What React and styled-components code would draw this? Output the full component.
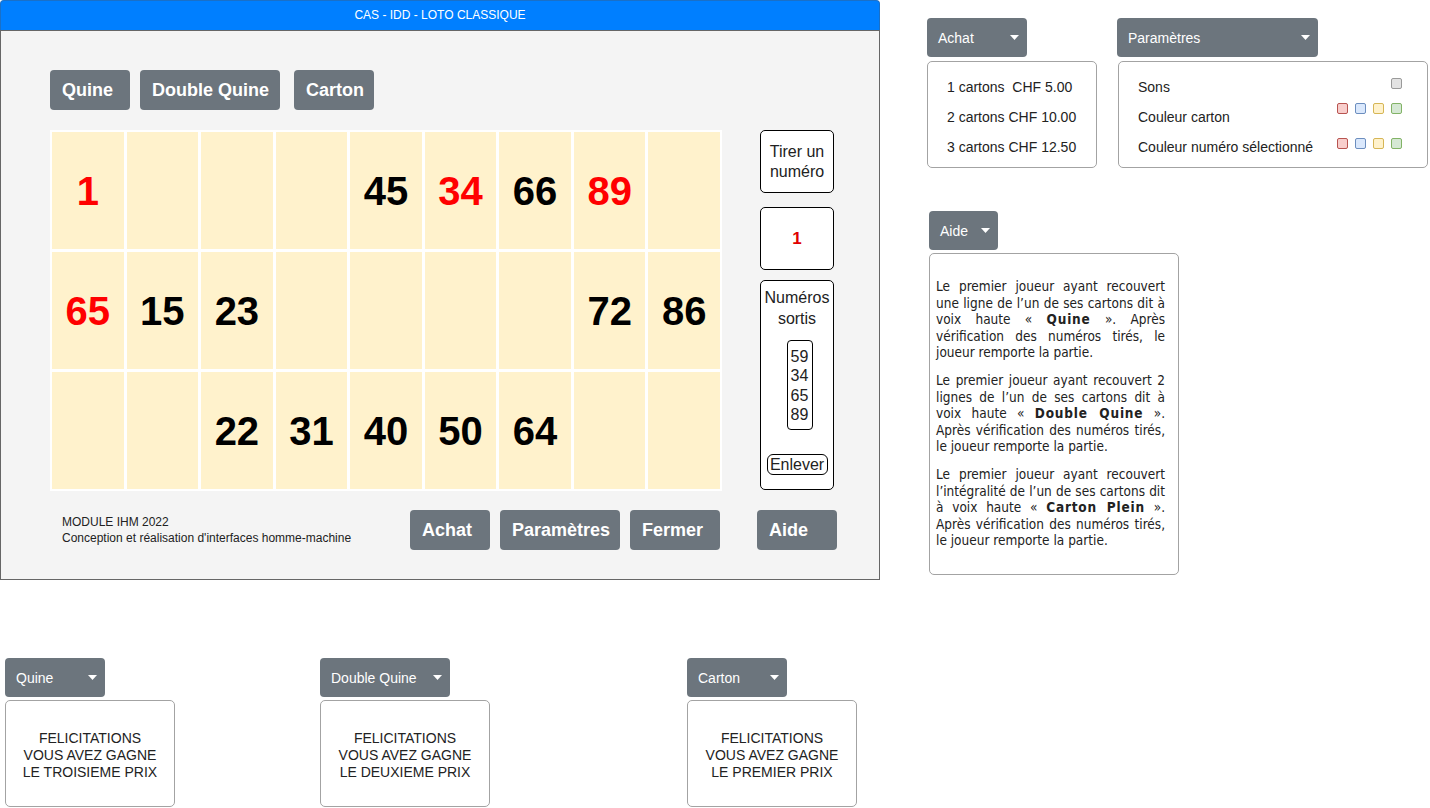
import React from 'react';
import styled, { createGlobalStyle } from 'styled-components';

const GlobalStyle = createGlobalStyle`
  html, body {
    margin: 0;
    padding: 0;
    background: #ffffff;
  }
  body {
    font-family: 'Liberation Sans', Arial, sans-serif;
    color: #222;
  }
  * { box-sizing: border-box; }
`

const Canvas = styled.div`
  position: relative;
  width: 1430px;
  height: 808px;
  overflow: hidden;
`

// windows of the mockup lie on a free canvas
const Placed = styled.div`
  position: absolute;
  left: ${p => p.$x}px;
  top: ${p => p.$y}px;
  display: flex;
  flex-direction: column;
`

const Window = styled(Placed)`
  width: 880px;
  height: 580px;
`

const TitleBar = styled.div`
  height: 30px;
  background: #007fff;
  border-radius: 4px 4px 0 0;
  border: 1px solid #1a70c8;
  border-bottom: none;
  color: #fff;
  font-size: 12px;
  display: flex;
  align-items: center;
  justify-content: center;
  padding-bottom: 1px;
`

const WindowBody = styled.div`
  flex: 1;
  background: #f4f4f4;
  border: 1px solid #666;
  padding: 39px 0 0 49px;
  display: flex;
  flex-direction: column;
`

const ButtonRow = styled.div`
  display: flex;
  gap: 10px;
  align-items: center;
`

const GrayButton = styled.div`
  width: ${p => p.$w}px;
  margin-left: ${p => p.$ml || 0}px;
  height: 40px;
  background: #6c757d;
  border-radius: 4px;
  color: #fff;
  font-weight: bold;
  font-size: 18px;
  display: flex;
  align-items: center;
  padding: 0 12px;
  white-space: nowrap;
`

const PlayArea = styled.div`
  display: flex;
  margin-top: 20px;
  align-items: flex-start;
`

const Board = styled.div`
  width: 672px;
  height: 361px;
  background: #fff;
  padding: 2px;
  display: grid;
  grid-template-columns: repeat(9, 1fr);
  grid-template-rows: repeat(3, 1fr);
  gap: 3px;
`

const Cell = styled.div`
  background: #fff2cc;
  display: flex;
  align-items: center;
  justify-content: center;
  font-weight: bold;
  font-size: 40px;
  padding-top: 2px;
  color: ${p => (p.$hit ? '#ff0000' : '#000')};
`

const Side = styled.div`
  margin-left: 38px;
  width: 74px;
  display: flex;
  flex-direction: column;
`

const SideBox = styled.div`
  height: ${p => p.$h}px;
  margin-bottom: ${p => p.$mb || 0}px;
  background: #fff;
  border: 1px solid #000;
  border-radius: 5px;
  font-size: 16px;
  line-height: ${p => (p.$top ? 21 : 20)}px;
  text-align: center;
  display: flex;
  flex-direction: column;
  align-items: center;
  justify-content: ${p => (p.$top ? 'flex-start' : 'center')};
  padding-top: ${p => (p.$top ? 6 : 0)}px;
`

const DrawnNumber = styled.span`
  color: #e00000;
  font-weight: bold;
  font-size: 17px;
`

const DrawnList = styled.div`
  margin-top: 11px;
  margin-left: 5px;
  width: 26px;
  height: 90px;
  border: 1px solid #000;
  border-radius: 4px;
  padding-top: 6px;
  line-height: 19.3px;
`

const SmallButton = styled.div`
  margin-top: 24px;
  width: 61px;
  height: 21px;
  border: 1px solid #000;
  border-radius: 6px;
  line-height: 19px;
`

const Footer = styled.div`
  display: flex;
  align-items: center;
  margin-top: 19px;
  gap: 10px;
`

const Credits = styled.div`
  margin-left: 12px;
  width: 338px;
  font-size: 12px;
  line-height: 16px;
  color: #222;
`

const DropButton = styled.div`
  width: ${p => p.$w}px;
  height: 39px;
  background: #6c757d;
  border-radius: 4px;
  color: #fff;
  font-size: 14px;
  display: flex;
  align-items: center;
  justify-content: space-between;
  padding: 0 8px 0 11px;
`

const Caret = () => (
  <svg width="9" height="5" viewBox="0 0 9 5">
    <polygon points="0,0 9,0 4.5,5" fill="#fff" />
  </svg>
)

const Menu = styled.div`
  margin-top: ${p => p.$gap || 4}px;
  margin-left: ${p => p.$ml || 0}px;
  width: ${p => p.$w}px;
  height: ${p => p.$h}px;
  background: #fff;
  border: 1px solid #a3a3a3;
  border-radius: 5px;
  font-size: 14px;
  color: #222;
`

const MenuList = styled(Menu)`
  display: flex;
  flex-direction: column;
  gap: 14px;
  padding: 17px 19px;
  line-height: 16px;
`

const SettingRow = styled.div`
  display: flex;
  justify-content: space-between;
  align-items: flex-start;
  line-height: 16px;
  padding-right: 6px;
`

const Swatches = styled.div`
  display: flex;
  gap: 7px;
  margin-top: ${p => p.$dy}px;
`

const Swatch = styled.span`
  width: 11px;
  height: 11px;
  border-radius: 2px;
  background: ${p => p.$fill};
  border: 1px solid ${p => p.$line};
`

const HelpText = styled(Menu)`
  font-family: 'DejaVu Sans Condensed', 'DejaVu Sans', sans-serif;
  font-stretch: semi-condensed;
  font-size: 13.5px;
  line-height: 16.5px;
  padding: 24px 13px 0 6px;
  text-align: justify;

  p {
    margin: 0 0 11.5px;
  }
  b {
    color: #222;
    letter-spacing: 0.8px;
  }
`

const Message = styled(Menu)`
  display: flex;
  align-items: center;
  justify-content: center;
  text-align: center;
  line-height: 17px;
  padding-top: 3px;
`

const colours = [
  ['#f8cecc', '#b85450'],
  ['#dae8fc', '#6c8ebf'],
  ['#fff2cc', '#d6b656'],
  ['#d5e8d4', '#82b366'],
]

const rows = [
  [1, null, null, null, 45, 34, 66, 89, null],
  [65, 15, 23, null, null, null, null, 72, 86],
  [null, null, 22, 31, 40, 50, 64, null, null],
]
const hits = [1, 34, 89, 65]

const prizes = [
  { x: 5, title: 'Quine', w: 100, prize: 'LE TROISIEME PRIX' },
  { x: 320, title: 'Double Quine', w: 130, prize: 'LE DEUXIEME PRIX' },
  { x: 687, title: 'Carton', w: 100, prize: 'LE PREMIER PRIX' },
]

const ColourSet = ({ dy }) => (
  <Swatches $dy={dy}>
    {colours.map(([f, l]) => <Swatch key={f} $fill={f} $line={l} />)}
  </Swatches>
)

const App = () => {
  return (
    <Canvas>
      <GlobalStyle />

      <Window $x={0} $y={0}>
        <TitleBar>CAS - IDD - LOTO CLASSIQUE</TitleBar>
        <WindowBody>
          <ButtonRow>
            <GrayButton $w={80}>Quine</GrayButton>
            <GrayButton $w={140}>Double Quine</GrayButton>
            <GrayButton $w={80} $ml={4}>Carton</GrayButton>
          </ButtonRow>

          <PlayArea>
            <Board>
              {rows.flat().map((n, i) => (
                <Cell key={i} $hit={hits.includes(n)}>{n}</Cell>
              ))}
            </Board>
            <Side>
              <SideBox $h={63} $mb={14}>Tirer un<br />numéro</SideBox>
              <SideBox $h={63} $mb={10}><DrawnNumber>1</DrawnNumber></SideBox>
              <SideBox $h={210} $top>
                Numéros<br />sortis
                <DrawnList>59<br />34<br />65<br />89</DrawnList>
                <SmallButton>Enlever</SmallButton>
              </SideBox>
            </Side>
          </PlayArea>

          <Footer>
            <Credits>
              MODULE IHM 2022<br />
              Conception et réalisation d'interfaces homme-machine
            </Credits>
            <GrayButton $w={80}>Achat</GrayButton>
            <GrayButton $w={120}>Paramètres</GrayButton>
            <GrayButton $w={90}>Fermer</GrayButton>
            <GrayButton $w={80} $ml={27}>Aide</GrayButton>
          </Footer>
        </WindowBody>
      </Window>

      <Placed $x={927} $y={18}>
        <DropButton $w={100}>Achat <Caret /></DropButton>
        <MenuList $w={170} $h={107}>
          <span>1 cartons&nbsp; CHF 5.00</span>
          <span>2 cartons CHF 10.00</span>
          <span>3 cartons CHF 12.50</span>
        </MenuList>
      </Placed>

      <Placed $x={1117} $y={18}>
        <DropButton $w={201}>Paramètres <Caret /></DropButton>
        <MenuList $w={310} $h={107} $ml={1}>
          <SettingRow>
            Sons
            <Swatches $dy={-1}><Swatch $fill="#e3e3e3" $line="#9a9a9a" /></Swatches>
          </SettingRow>
          <SettingRow>
            Couleur carton
            <ColourSet dy={-6} />
          </SettingRow>
          <SettingRow>
            Couleur numéro sélectionné
            <ColourSet dy={-1} />
          </SettingRow>
        </MenuList>
      </Placed>

      <Placed $x={929} $y={211}>
        <DropButton $w={69}>Aide <Caret /></DropButton>
        <HelpText $w={250} $h={322} $gap={3}>
          <p>
            Le premier joueur ayant recouvert une ligne de l’un de ses cartons dit à
            voix haute « <b>Quine</b> ». Après vérification des numéros tirés, le
            joueur remporte la partie.
          </p>
          <p>
            Le premier joueur ayant recouvert 2 lignes de l’un de ses cartons dit à
            voix haute « <b>Double Quine</b> ». Après vérification des numéros tirés,
            le joueur remporte la partie.
          </p>
          <p>
            Le premier joueur ayant recouvert l’intégralité de l’un de ses cartons dit
            à voix haute « <b>Carton Plein</b> ». Après vérification des numéros tirés,
            le joueur remporte la partie.
          </p>
        </HelpText>
      </Placed>

      {prizes.map(p => (
        <Placed key={p.title} $x={p.x} $y={658}>
          <DropButton $w={p.w}>{p.title} <Caret /></DropButton>
          <Message $w={170} $h={107} $gap={3}>
            FELICITATIONS<br />
            VOUS AVEZ GAGNE<br />
            {p.prize}
          </Message>
        </Placed>
      ))}
    </Canvas>
  );
}

export default App;
